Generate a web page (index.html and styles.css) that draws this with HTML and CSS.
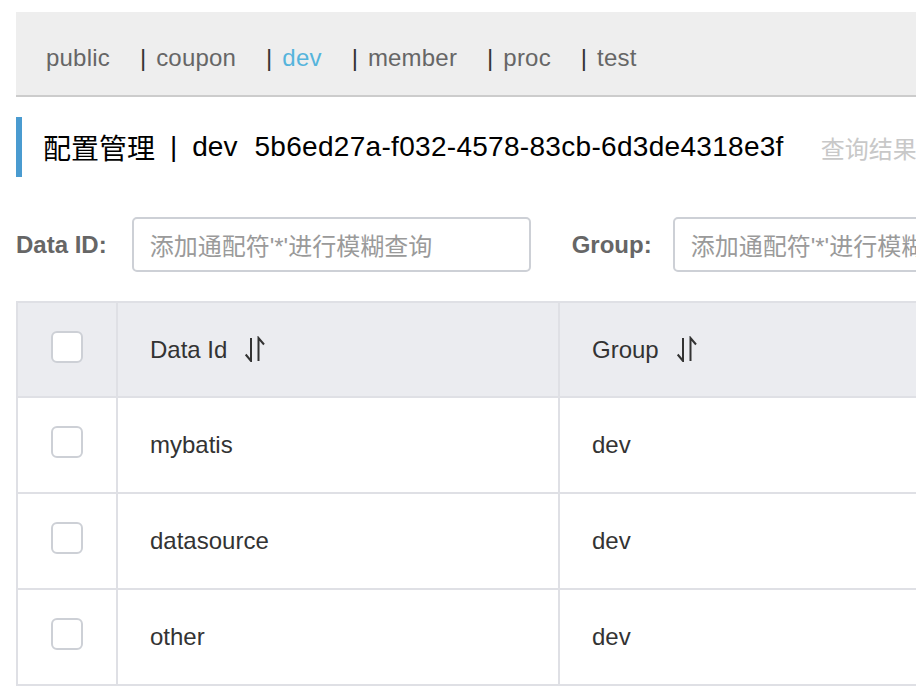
FILE: index.html
```html
<!DOCTYPE html>
<html lang="zh">
<head>
<meta charset="utf-8">
<title>配置管理</title>
<link rel="stylesheet" href="styles.css">
</head>
<body>
<div class="page">
  <nav class="ns-nav">
    <span class="ns-item">public</span>
    <span class="ns-sep">|</span><span class="ns-item">coupon</span>
    <span class="ns-sep">|</span><span class="ns-item active">dev</span>
    <span class="ns-sep">|</span><span class="ns-item">member</span>
    <span class="ns-sep">|</span><span class="ns-item">proc</span>
    <span class="ns-sep">|</span><span class="ns-item">test</span>
  </nav>

  <div class="title">
    <span class="t-main">配置管理</span>
    <span class="t-sep">|</span>
    <span class="t-ns">dev</span>
    <span class="t-id">5b6ed27a-f032-4578-83cb-6d3de4318e3f</span>
    <span class="t-res">查询结果</span>
  </div>

  <div class="search">
    <label class="s-label">Data ID:</label>
    <div class="s-input">添加通配符'*'进行模糊查询</div>
    <label class="s-label s-group">Group:</label>
    <div class="s-input">添加通配符'*'进行模糊查询</div>
  </div>

  <div class="table">
    <div class="row head">
      <div class="cell c-check"><span class="checkbox"></span></div>
      <div class="cell c-text">Data Id<svg class="sort" viewBox="0 0 22 26" width="22" height="26"><path d="M8 2V25L2.7 18.5M15.5 25V2L21 8.5" fill="none" stroke="#333" stroke-width="2"/></svg></div>
      <div class="cell c-text">Group<svg class="sort" viewBox="0 0 22 26" width="22" height="26"><path d="M8 2V25L2.7 18.5M15.5 25V2L21 8.5" fill="none" stroke="#333" stroke-width="2"/></svg></div>
    </div>
    <div class="row">
      <div class="cell c-check"><span class="checkbox"></span></div>
      <div class="cell c-text">mybatis</div>
      <div class="cell c-text">dev</div>
    </div>
    <div class="row">
      <div class="cell c-check"><span class="checkbox"></span></div>
      <div class="cell c-text">datasource</div>
      <div class="cell c-text">dev</div>
    </div>
    <div class="row">
      <div class="cell c-check"><span class="checkbox"></span></div>
      <div class="cell c-text">other</div>
      <div class="cell c-text">dev</div>
    </div>
  </div>
</div>
</body>
</html>
```

FILE: styles.css
```css
html, body {
  margin: 0;
  padding: 0;
  overflow: hidden;
  background: #fff;
}
body {
  font-family: "Liberation Sans", "Noto Sans CJK SC", sans-serif;
  color: #333;
}
.page {
  width: 1400px;
  padding: 12px 0 0 16px;
}

/* namespace nav */
.ns-nav {
  display: flex;
  align-items: flex-start;
  height: 49px;
  padding: 34px 0 0 30px;
  background: #eeeeee;
  border-bottom: 2px solid #cccccc;
  font-size: 24px;
  line-height: 24px;
  color: #666;
}
.ns-item { letter-spacing: 0.2px; }
.ns-item.active { color: #55b4dc; }
.ns-sep {
  color: #333;
  margin: 0 10px 0 30px;
}

/* title */
.title {
  display: flex;
  align-items: center;
  height: 60px;
  margin-top: 20px;
  border-left: 6px solid #4a9bd0;
  padding-left: 21px;
  font-size: 28px;
  color: #000;
  white-space: nowrap;
}
.t-sep { margin: 0 15px; }
.t-id { margin-left: 17px; letter-spacing: 0.3px; }
.t-res {
  margin-left: 37px;
  font-size: 24px;
  color: #c8c8c8;
}

/* search */
.search {
  display: flex;
  align-items: center;
  margin-top: 40px;
  height: 55px;
  white-space: nowrap;
}
.s-label {
  font-size: 24px;
  font-weight: bold;
  color: #666;
  margin-right: 25px;
}
.s-group { margin-left: 41px; margin-right: 21px; }
.s-input {
  box-sizing: border-box;
  width: 399px;
  height: 55px;
  border: 2px solid #cdd0d6;
  border-radius: 5px;
  padding-left: 16px;
  display: flex;
  align-items: center;
  font-size: 24px;
  color: #9a9a9a;
  overflow: hidden;
}

/* table */
.table {
  margin-top: 29px;
  border-top: 2px solid #dfe0e5;
  border-left: 2px solid #dfe0e5;
}
.row {
  display: grid;
  grid-template-columns: 100px 442px 1fr;
  height: 96px;
}
.row.head {
  height: 95px;
  background: #ebecf0;
}
.cell {
  box-sizing: border-box;
  border-right: 2px solid #dfe0e5;
  border-bottom: 2px solid #dfe0e5;
  display: flex;
  align-items: center;
  font-size: 24px;
  color: #333;
}
.c-check { justify-content: center; }
.c-text { padding-left: 32px; }
.checkbox {
  box-sizing: border-box;
  width: 32px;
  height: 32px;
  border: 2px solid #cdd0d6;
  border-radius: 6px;
  background: #fff;
  margin-bottom: 6px;
}
.sort {
  margin-left: 16px;
  margin-bottom: 2px;
}
```
